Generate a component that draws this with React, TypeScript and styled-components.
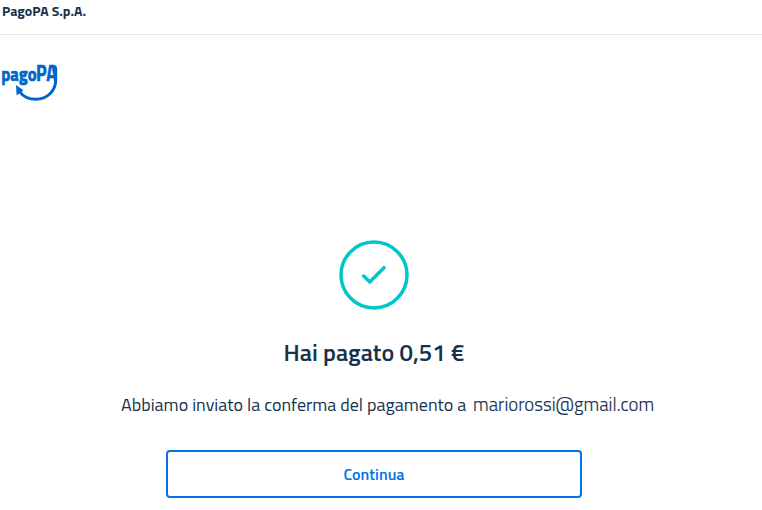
import React from "react";
import styled, { createGlobalStyle } from "styled-components";

const GlobalStyle = createGlobalStyle`
  * { box-sizing: border-box; }
  body { margin: 0; background: #fff; color: #17324d; font-family: "Titillium Web", Roboto, sans-serif; }
`;

const Page = styled.div`
  height: 510px;
  display: flex;
  flex-direction: column;
  overflow: hidden;
`;

const TopBar = styled.header`
  height: 35px;
  padding: 1px 2px 0;
  border-bottom: 1px solid #e3e7eb;
  font-size: 14px;
  line-height: 20px;
  font-weight: 700;
`;

const LogoRow = styled.div`
  height: 205px;
  padding-top: 15px;
`;

const Result = styled.main`
  width: 748px;
  display: flex;
  flex-direction: column;
  align-items: center;
`;

const SuccessIcon = styled.svg`
  width: 70px;
  height: 70px;
  display: block;
`;

const Title = styled.h1`
  margin: 26px 0 0;
  font-size: 24px;
  line-height: 32px;
  font-weight: 600;
  white-space: nowrap;
`;

const Message = styled.p`
  height: 24px;
  margin: 24px 0 0;
  padding-left: 27px;
  display: flex;
  align-items: baseline;
  gap: 6px;
  font-size: 18px;
  line-height: 24px;
  white-space: nowrap;
`;

const MessageText = styled.span`
  width: 346px;
`;

const Email = styled.span`
  width: 181px;
  font-size: 18.8px;
  font-weight: 300;
  -webkit-text-stroke: 0.15px #17324d;
`;

const Button = styled.button`
  width: 416px;
  height: 48px;
  margin-top: 34px;
  padding: 0;
  border: 2px solid #0073e6;
  border-radius: 4px;
  background: #fff;
  color: #0073e6;
  font-family: inherit;
  font-size: 16px;
  font-weight: 600;
`;

const Logo = () => (
  <svg width="66" height="54" viewBox="0 -14 66 54" fill="#0066cc" role="img" aria-label="pagoPA" display="block">
    <g fontFamily='"Titillium Web", Roboto, sans-serif' fontWeight="700" stroke="#0066cc" strokeWidth="0.6">
      <text x="1.2" y="16.7" fontSize="20" textLength="35.3" lengthAdjust="spacingAndGlyphs">pago</text>
      <text x="36" y="17" fontSize="23.5" textLength="21" lengthAdjust="spacingAndGlyphs">PA</text>
    </g>
    <path d="M50 2.4H53.5Q55.7 2.4 55.7 5V16C55.7 27 47 35.3 36 35.3C29 35.3 23 32.5 19.5 27.5" fill="none" stroke="#0066cc" strokeWidth="3" />
    <path d="M16 21L23.5 26.3L16.7 31.5Z" />
  </svg>
);

export default function App() {
  return (
    <Page>
      <GlobalStyle />
      <TopBar>PagoPA S.p.A.</TopBar>
      <LogoRow><Logo /></LogoRow>
      <Result>
        <SuccessIcon viewBox="0 0 70 70" fill="none" stroke="#00c5ca">
          <circle cx="35" cy="35" r="33" strokeWidth="3.5" />
          <path d="M24.7 36L30.7 42L45 27.7" strokeWidth="3.5" strokeLinecap="round" strokeLinejoin="round" />
        </SuccessIcon>
        <Title>Hai pagato 0,51 €</Title>
        <Message>
          <MessageText>Abbiamo inviato la conferma del pagamento a</MessageText>
          <Email>mariorossi@gmail.com</Email>
        </Message>
        <Button>Continua</Button>
      </Result>
    </Page>
  );
}
